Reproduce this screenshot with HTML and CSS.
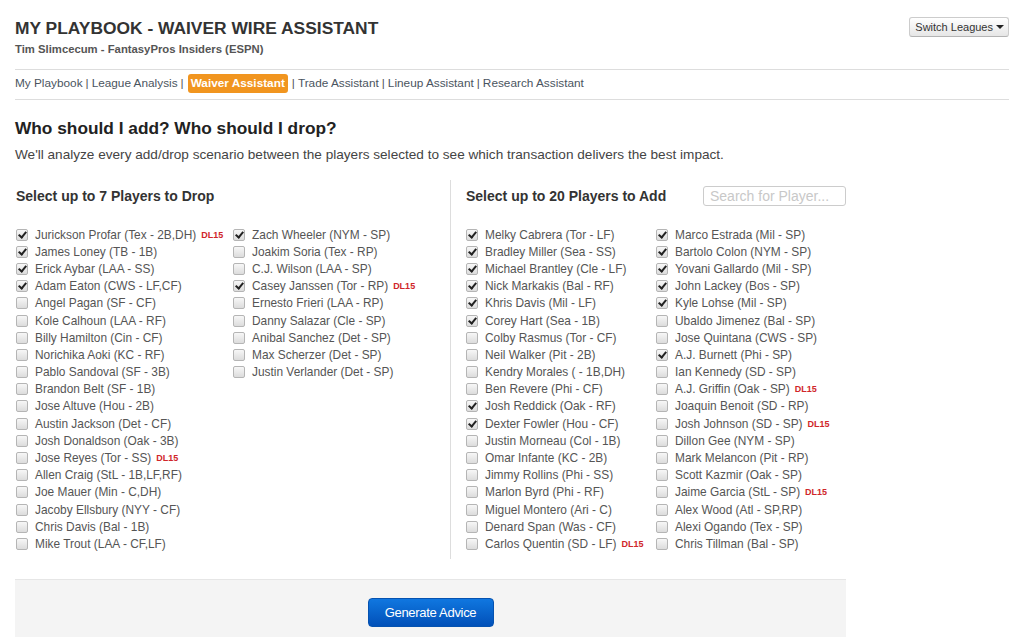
FILE: index.html
```html
<!DOCTYPE html>
<html>
<head>
<meta charset="utf-8">
<title>My Playbook - Waiver Wire Assistant</title>
<link rel="stylesheet" href="styles.css">
</head>
<body>
<div class="page">
  <header class="header">
    <div class="titles">
      <h1 class="title">MY PLAYBOOK - WAIVER WIRE ASSISTANT</h1>
      <div class="subtitle">Tim Slimcecum - FantasyPros Insiders (ESPN)</div>
    </div>
    <button class="switch">Switch Leagues <span class="caret"></span></button>
  </header>
  <nav class="nav">
    <a href="#">My Playbook</a><span class="sep">|</span><a href="#">League Analysis</a><span class="sep">|</span><a href="#" class="active">Waiver Assistant</a><span class="sep">|</span><a href="#">Trade Assistant</a><span class="sep">|</span><a href="#">Lineup Assistant</a><span class="sep">|</span><a href="#">Research Assistant</a>
  </nav>
  <h2 class="heading">Who should I add? Who should I drop?</h2>
  <p class="intro">We'll analyze every add/drop scenario between the players selected to see which transaction delivers the best impact.</p>

  <div class="tool">
    <div class="panels">
      <section class="panel drop">
        <div class="panel-head"><h3>Select up to 7 Players to Drop</h3></div>
        <div class="cols">
          <ul class="col">
            <li><span class="cb on"></span>Jurickson Profar (Tex - 2B,DH)<span class="dl">DL15</span></li>
            <li><span class="cb on"></span>James Loney (TB - 1B)</li>
            <li><span class="cb on"></span>Erick Aybar (LAA - SS)</li>
            <li><span class="cb on"></span>Adam Eaton (CWS - LF,CF)</li>
            <li><span class="cb"></span>Angel Pagan (SF - CF)</li>
            <li><span class="cb"></span>Kole Calhoun (LAA - RF)</li>
            <li><span class="cb"></span>Billy Hamilton (Cin - CF)</li>
            <li><span class="cb"></span>Norichika Aoki (KC - RF)</li>
            <li><span class="cb"></span>Pablo Sandoval (SF - 3B)</li>
            <li><span class="cb"></span>Brandon Belt (SF - 1B)</li>
            <li><span class="cb"></span>Jose Altuve (Hou - 2B)</li>
            <li><span class="cb"></span>Austin Jackson (Det - CF)</li>
            <li><span class="cb"></span>Josh Donaldson (Oak - 3B)</li>
            <li><span class="cb"></span>Jose Reyes (Tor - SS)<span class="dl">DL15</span></li>
            <li><span class="cb"></span>Allen Craig (StL - 1B,LF,RF)</li>
            <li><span class="cb"></span>Joe Mauer (Min - C,DH)</li>
            <li><span class="cb"></span>Jacoby Ellsbury (NYY - CF)</li>
            <li><span class="cb"></span>Chris Davis (Bal - 1B)</li>
            <li><span class="cb"></span>Mike Trout (LAA - CF,LF)</li>
          </ul>
          <ul class="col">
            <li><span class="cb on"></span>Zach Wheeler (NYM - SP)</li>
            <li><span class="cb"></span>Joakim Soria (Tex - RP)</li>
            <li><span class="cb"></span>C.J. Wilson (LAA - SP)</li>
            <li><span class="cb on"></span>Casey Janssen (Tor - RP)<span class="dl">DL15</span></li>
            <li><span class="cb"></span>Ernesto Frieri (LAA - RP)</li>
            <li><span class="cb"></span>Danny Salazar (Cle - SP)</li>
            <li><span class="cb"></span>Anibal Sanchez (Det - SP)</li>
            <li><span class="cb"></span>Max Scherzer (Det - SP)</li>
            <li><span class="cb"></span>Justin Verlander (Det - SP)</li>
          </ul>
        </div>
      </section>
      <section class="panel add">
        <div class="panel-head"><h3>Select up to 20 Players to Add</h3><input class="search" type="text" placeholder="Search for Player..."></div>
        <div class="cols">
          <ul class="col">
            <li><span class="cb on"></span>Melky Cabrera (Tor - LF)</li>
            <li><span class="cb on"></span>Bradley Miller (Sea - SS)</li>
            <li><span class="cb on"></span>Michael Brantley (Cle - LF)</li>
            <li><span class="cb on"></span>Nick Markakis (Bal - RF)</li>
            <li><span class="cb on"></span>Khris Davis (Mil - LF)</li>
            <li><span class="cb on"></span>Corey Hart (Sea - 1B)</li>
            <li><span class="cb"></span>Colby Rasmus (Tor - CF)</li>
            <li><span class="cb"></span>Neil Walker (Pit - 2B)</li>
            <li><span class="cb"></span>Kendry Morales ( - 1B,DH)</li>
            <li><span class="cb"></span>Ben Revere (Phi - CF)</li>
            <li><span class="cb on"></span>Josh Reddick (Oak - RF)</li>
            <li><span class="cb on"></span>Dexter Fowler (Hou - CF)</li>
            <li><span class="cb"></span>Justin Morneau (Col - 1B)</li>
            <li><span class="cb"></span>Omar Infante (KC - 2B)</li>
            <li><span class="cb"></span>Jimmy Rollins (Phi - SS)</li>
            <li><span class="cb"></span>Marlon Byrd (Phi - RF)</li>
            <li><span class="cb"></span>Miguel Montero (Ari - C)</li>
            <li><span class="cb"></span>Denard Span (Was - CF)</li>
            <li><span class="cb"></span>Carlos Quentin (SD - LF)<span class="dl">DL15</span></li>
          </ul>
          <ul class="col">
            <li><span class="cb on"></span>Marco Estrada (Mil - SP)</li>
            <li><span class="cb on"></span>Bartolo Colon (NYM - SP)</li>
            <li><span class="cb on"></span>Yovani Gallardo (Mil - SP)</li>
            <li><span class="cb on"></span>John Lackey (Bos - SP)</li>
            <li><span class="cb on"></span>Kyle Lohse (Mil - SP)</li>
            <li><span class="cb"></span>Ubaldo Jimenez (Bal - SP)</li>
            <li><span class="cb"></span>Jose Quintana (CWS - SP)</li>
            <li><span class="cb on"></span>A.J. Burnett (Phi - SP)</li>
            <li><span class="cb"></span>Ian Kennedy (SD - SP)</li>
            <li><span class="cb"></span>A.J. Griffin (Oak - SP)<span class="dl">DL15</span></li>
            <li><span class="cb"></span>Joaquin Benoit (SD - RP)</li>
            <li><span class="cb"></span>Josh Johnson (SD - SP)<span class="dl">DL15</span></li>
            <li><span class="cb"></span>Dillon Gee (NYM - SP)</li>
            <li><span class="cb"></span>Mark Melancon (Pit - RP)</li>
            <li><span class="cb"></span>Scott Kazmir (Oak - SP)</li>
            <li><span class="cb"></span>Jaime Garcia (StL - SP)<span class="dl">DL15</span></li>
            <li><span class="cb"></span>Alex Wood (Atl - SP,RP)</li>
            <li><span class="cb"></span>Alexi Ogando (Tex - SP)</li>
            <li><span class="cb"></span>Chris Tillman (Bal - SP)</li>
          </ul>
        </div>
      </section>
    </div>
    <div class="actions">
      <button class="generate">Generate Advice</button>
    </div>
  </div>
</div>
</body>
</html>
```
FILE: styles.css
```css
* { box-sizing: border-box; }
html, body { margin: 0; padding: 0; background: #fff; }
body {
  font-family: "Liberation Sans", Arial, sans-serif;
  color: #555;
  overflow: hidden;
}
.page { padding: 0 15px; }

.header {
  display: flex;
  justify-content: space-between;
  align-items: flex-start;
  padding-top: 17px;
  padding-bottom: 13px;
  border-bottom: 1px solid #ddd;
}
.title {
  margin: 0;
  font-size: 17.4px;
  line-height: 22px;
  font-weight: bold;
  color: #333;
}
.subtitle {
  margin-top: 3px;
  font-size: 11.3px;
  line-height: 14px;
  font-weight: bold;
  color: #555;
}
.switch {
  margin-top: 0;
  height: 20px;
  padding: 0 4px 0 5px;
  font-family: "Liberation Sans", Arial, sans-serif;
  font-size: 11px;
  color: #333;
  background: linear-gradient(#ffffff, #e6e6e6);
  border: 1px solid #ccc;
  border-bottom-color: #b3b3b3;
  border-radius: 3px;
  display: flex;
  align-items: center;
  gap: 3px;
}
.caret {
  display: inline-block;
  width: 0; height: 0;
  border-left: 4px solid transparent;
  border-right: 4px solid transparent;
  border-top: 4px solid #222;
}

.nav {
  padding: 4px 0 6px;
  font-size: 11.8px;
  line-height: 19px;
  border-bottom: 1px solid #ddd;
  display: flex;
  align-items: center;
}
.nav a { color: #4a5460; text-decoration: none; }
.nav .sep { color: #555; padding: 0 3px; }
.nav a.active {
  background: #f1951f;
  color: #fff;
  font-weight: bold;
  padding: 0 3px;
  border-radius: 3px;
  margin: 0 1px;
}

.heading {
  margin: 17px 0 0;
  font-size: 17.3px;
  line-height: 22px;
  font-weight: bold;
  color: #222;
}
.intro {
  margin: 7px 0 0;
  font-size: 13.6px;
  line-height: 18px;
  color: #444;
}

.tool { width: 831px; margin-top: 16px; }
.panels { display: flex; }
.panel { padding-top: 6px; }
.panel.drop { width: 435px; padding-left: 1px; }
.panel.add {
  width: 396px;
  border-left: 1px solid #ddd;
  padding-left: 15px;
  padding-bottom: 6px;
}
.panel-head {
  display: flex;
  justify-content: space-between;
  align-items: center;
  height: 20px;
}
.panel-head h3 {
  margin: 0;
  font-size: 14px;
  line-height: 18px;
  font-weight: bold;
  color: #333;
}
.search {
  width: 143px;
  height: 20px;
  border: 1px solid #ccc;
  border-radius: 3px;
  padding: 0 6px;
  font-family: "Liberation Sans", Arial, sans-serif;
  font-size: 14px;
  color: #555;
}
.search::placeholder { color: #c8c8c8; }

.cols { display: flex; margin-top: 20px; }
.drop .col { width: 235px; }
.add .col { width: 206px; }
.col { list-style: none; margin: 0; padding: 0; }
.col li {
  display: flex;
  align-items: center;
  height: 17.2px;
  font-size: 11.9px;
  color: #555;
  white-space: nowrap;
}
.cb {
  flex: none;
  width: 12px;
  height: 12px;
  margin-right: 7px;
  border: 1px solid #b5b5b5;
  border-radius: 2px;
  background: linear-gradient(#f7f7f7, #dcdcdc);
  position: relative;
}
.cb.on::after {
  content: "";
  position: absolute;
  left: 3px;
  top: 0px;
  width: 3px;
  height: 6px;
  border-right: 2px solid #222;
  border-bottom: 2px solid #222;
  transform: rotate(40deg);
}
.dl {
  margin-left: 5px;
  font-size: 9px;
  font-weight: bold;
  color: #d0262a;
}

.actions {
  margin-top: 20px;
  background: #f4f4f4;
  border-top: 1px solid #e6e6e6;
  padding: 18px 0 20px;
  display: flex;
  justify-content: center;
}
.generate {
  width: 126px;
  height: 29px;
  border: 1px solid #0552b0;
  border-radius: 4px;
  background: linear-gradient(#1077e0, #0150b8);
  color: #fff;
  font-family: "Liberation Sans", Arial, sans-serif;
  font-size: 13px;
  letter-spacing: -0.3px;
}
```
